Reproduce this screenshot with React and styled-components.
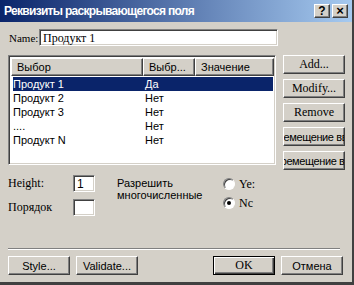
import React from "react";
import styled, { createGlobalStyle, css } from "styled-components";

const GlobalStyle = createGlobalStyle`
    html, body {
        margin: 0;
        padding: 0;
        background: #d4d0c8;
    }
`;

const sunken = css`
    border: 1px solid;
    border-color: #808080 #ffffff #ffffff #808080;
    box-shadow: inset 1px 1px #404040, inset -1px -1px #d4d0c8;
`;

const raised = css`
    border: 1px solid;
    border-color: #ffffff #404040 #404040 #ffffff;
    box-shadow: inset -1px -1px #808080, inset 1px 1px #d4d0c8;
`;

const Window = styled.div`
    width: 354px;
    height: 285px;
    box-sizing: border-box;
    background: #d4d0c8;
    border-right: 2px solid #404040;
    border-bottom: 3px solid #404040;
    display: flex;
    flex-direction: column;
    overflow: hidden;
`;

const TitleBar = styled.div`
    height: 22px;
    flex: none;
    display: flex;
    align-items: center;
    padding: 0 4px 0 4px;
    background: linear-gradient(to right, #0a246a, #a6caf0);
    color: #ffffff;
    font-family: "Liberation Sans", Arial, sans-serif;
    font-weight: bold;
    h1{
        flex: 1;
        margin: 0;
        font-size: 12px;
        letter-spacing: -0.7px;
        white-space: nowrap;
    }
`;

const CaptionButton = styled.div`
    ${raised};
    width: 14px;
    height: 12px;
    background: #d4d0c8;
    color: #000;
    font-family: "Liberation Sans", Arial, sans-serif;
    font-size: ${p => (p.$close ? "13px" : "12px")};
    font-weight: bold;
    line-height: 12px;
    text-align: center;
    margin-left: ${p => (p.$close ? "2px" : "0")};
`;

const Body = styled.div`
    padding: 7px 9px 0 8px;
    display: flex;
    flex-direction: column;
    flex: 1;
`;

const NameRow = styled.div`
    display: flex;
    align-items: center;
    gap: 2px;
    label{
        font-family: "Liberation Serif", serif;
        font-size: 11px;
        width: 28px;
        padding-left: 1px;
    }
`;

const TextBox = styled.div`
    ${sunken};
    box-sizing: border-box;
    background: #fff;
    width: ${p => p.$w}px;
    height: 17px;
    padding: 1px 3px;
    font-family: ${p => (p.$serif ? '"Liberation Serif", serif' : '"Liberation Sans", Arial, sans-serif')};
    font-size: 12px;
    line-height: 14px;
`;

const Main = styled.div`
    display: grid;
    grid-template-columns: 268px 62px;
    align-items: start;
    gap: 7px;
    margin-top: 9px;
`;

const ListBox = styled.div`
    ${sunken};
    box-sizing: border-box;
    height: 110px;
    background: #fff;
    padding: 2px;
    font-family: "Liberation Sans", Arial, sans-serif;
    font-size: 11px;
`;

const Header = styled.div`
    display: grid;
    grid-template-columns: 132px 52px 79px 1fr;
    height: 18px;
`;

const HeadCell = styled.div`
    ${raised};
    background: #d4d0c8;
    padding: 0 5px;
    line-height: 16px;
    white-space: nowrap;
    overflow: hidden;
`;

const Rows = styled.div`
    margin-top: 1px;
`;

const Row = styled.div`
    display: grid;
    grid-template-columns: 132px 1fr;
    height: 14px;
    line-height: 14px;
    margin-left: 2px;
    background: ${p => (p.$selected ? "#0a246a" : "transparent")};
    color: ${p => (p.$selected ? "#fff" : "#000")};
`;

const ButtonColumn = styled.div`
    display: flex;
    flex-direction: column;
    gap: 5px;
`;

const Button = styled.div`
    ${raised};
    box-sizing: border-box;
    width: 62px;
    height: 19px;
    display: flex;
    align-items: center;
    justify-content: center;
    white-space: nowrap;
    overflow: hidden;
    font-family: ${p => (p.$serif ? '"Liberation Serif", serif' : '"Liberation Sans", Arial, sans-serif')};
    font-size: ${p => (p.$serif ? "12px" : "11px")};
    letter-spacing: ${p => (p.$tight ? "-0.4px" : "0")};
    ${p => p.$default && css`
        border: 1px solid #000;
        box-shadow: inset 1px 1px #ffffff, inset -1px -1px #404040, inset -2px -2px #808080;
    `}
`;

const Lower = styled.div`
    display: grid;
    grid-template-columns: 65px 44px 106px 1fr;
    grid-template-rows: 17px 17px;
    row-gap: 7px;
    margin-top: 5px;
`;

const Cell = styled.div`
    grid-column: ${p => p.$col};
    grid-row: ${p => p.$row};
`;

const FieldLabel = styled(Cell)`
    font-family: "Liberation Serif", serif;
    font-size: 12px;
    line-height: 17px;
`;

const Caption = styled(Cell)`
    font-family: "Liberation Sans", Arial, sans-serif;
    font-size: 11px;
    line-height: 12px;
    padding-top: 2px;
    white-space: nowrap;
`;

const RadioGroup = styled(Cell)`
    display: flex;
    flex-direction: column;
    gap: 7px;
    padding-top: 3px;
`;

const RadioRow = styled.div`
    display: flex;
    align-items: center;
    gap: 4px;
    font-family: "Liberation Serif", serif;
    font-size: 12px;
    height: 12px;
`;

const RadioDot = styled.span`
    box-sizing: border-box;
    width: 12px;
    height: 12px;
    border-radius: 50%;
    background: #fff;
    border: 1px solid;
    border-color: #808080 #ffffff #ffffff #808080;
    box-shadow: inset 1px 1px #404040;
    display: flex;
    align-items: center;
    justify-content: center;
    &::after{
        content: "";
        width: 4px;
        height: 4px;
        border-radius: 50%;
        background: ${p => (p.$on ? "#000" : "transparent")};
    }
`;

const Separator = styled.div`
    margin-top: 32px;
    width: 332px;
    border-top: 1px solid #808080;
    border-bottom: 1px solid #ffffff;
`;

const Footer = styled.div`
    display: flex;
    gap: 6px;
    margin-top: 6px;
    .spacer{
        flex: 1;
    }
`;

const rows = [
    ["Продукт 1", "Да"],
    ["Продукт 2", "Нет"],
    ["Продукт 3", "Нет"],
    ["....", "Нет"],
    ["Продукт N", "Нет"],
];

const App = () => {
    return (
        <>
            <GlobalStyle />
            <Window>
                <TitleBar>
                    <h1>Реквизиты раскрывающегося поля</h1>
                    <CaptionButton>?</CaptionButton>
                    <CaptionButton $close>×</CaptionButton>
                </TitleBar>
                <Body>
                    <NameRow>
                        <label>Name:</label>
                        <TextBox $w={239} $serif>Продукт 1</TextBox>
                    </NameRow>
                    <Main>
                        <ListBox>
                            <Header>
                                <HeadCell>Выбор</HeadCell>
                                <HeadCell>Выбр...</HeadCell>
                                <HeadCell>Значение</HeadCell>
                                <div />
                            </Header>
                            <Rows>
                                {rows.map(([name, val], i) => (
                                    <Row key={i} $selected={i === 0}>
                                        <span>{name}</span>
                                        <span>{val}</span>
                                    </Row>
                                ))}
                            </Rows>
                        </ListBox>
                        <ButtonColumn>
                            <Button $serif>Add...</Button>
                            <Button $serif>Modify...</Button>
                            <Button $serif>Remove</Button>
                            <Button $tight>Перемещение вверх</Button>
                            <Button $tight>Перемещение вниз</Button>
                        </ButtonColumn>
                    </Main>
                    <Lower>
                        <FieldLabel $col={1} $row={1}>Height:</FieldLabel>
                        <Cell $col={2} $row={1}>
                            <TextBox $w={22}>1</TextBox>
                        </Cell>
                        <FieldLabel $col={1} $row={2}>Порядок</FieldLabel>
                        <Cell $col={2} $row={2}>
                            <TextBox $w={22} />
                        </Cell>
                        <Caption $col={3} $row="1 / span 2">Разрешить<br />многочисленные</Caption>
                        <RadioGroup $col={4} $row="1 / span 2">
                            <RadioRow><RadioDot />Ye:</RadioRow>
                            <RadioRow><RadioDot $on />Nc</RadioRow>
                        </RadioGroup>
                    </Lower>
                    <Separator />
                    <Footer>
                        <Button>Style...</Button>
                        <Button>Validate...</Button>
                        <div className="spacer" />
                        <Button $serif $default>OK</Button>
                        <Button>Отмена</Button>
                    </Footer>
                </Body>
            </Window>
        </>
    );
};

export default App;
